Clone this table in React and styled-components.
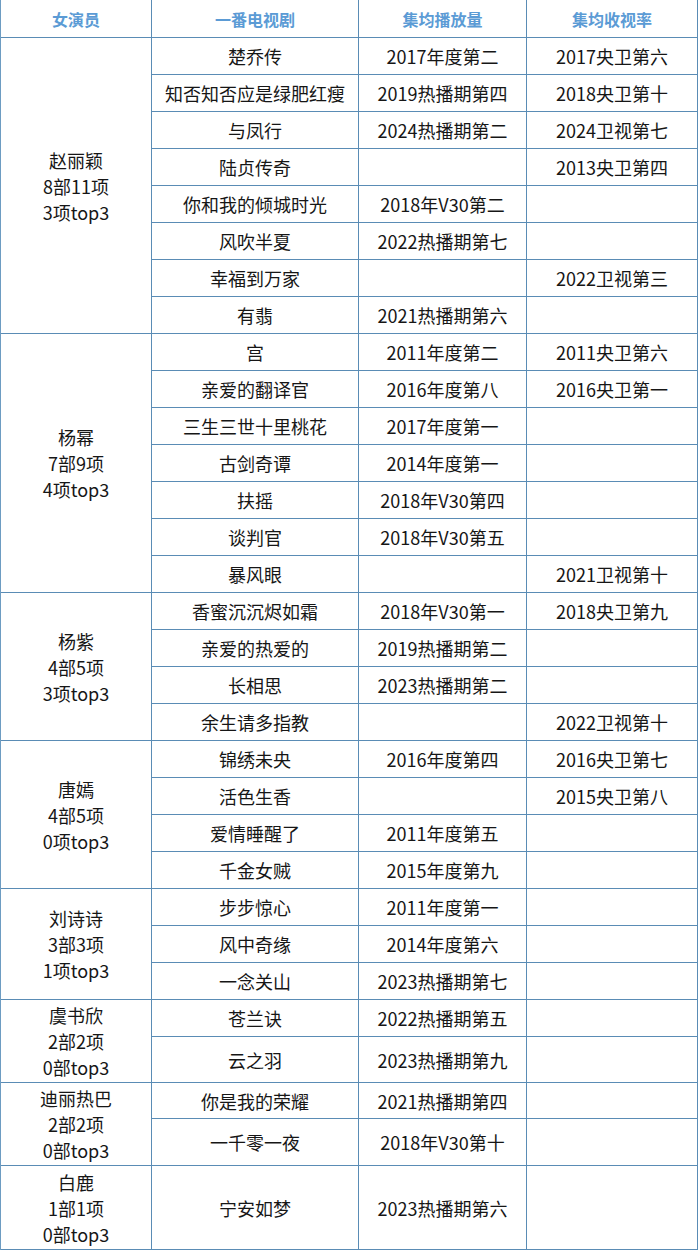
import React from "react";
import styled, { createGlobalStyle } from "styled-components";

const Global = createGlobalStyle`
  html, body { margin: 0; padding: 0; background: #ffffff; }
  body { font-family: "Noto Sans CJK SC", "Noto Sans", sans-serif; }
`;

const groups = [
  {
    name: "赵丽颖\n8部11项\n3项top3",
    rows: [
      ["楚乔传", "2017年度第二", "2017央卫第六"],
      ["知否知否应是绿肥红瘦", "2019热播期第四", "2018央卫第十"],
      ["与凤行", "2024热播期第二", "2024卫视第七"],
      ["陆贞传奇", "", "2013央卫第四"],
      ["你和我的倾城时光", "2018年V30第二", ""],
      ["风吹半夏", "2022热播期第七", ""],
      ["幸福到万家", "", "2022卫视第三"],
      ["有翡", "2021热播期第六", ""],
    ],
  },
  {
    name: "杨幂\n7部9项\n4项top3",
    rows: [
      ["宫", "2011年度第二", "2011央卫第六"],
      ["亲爱的翻译官", "2016年度第八", "2016央卫第一"],
      ["三生三世十里桃花", "2017年度第一", ""],
      ["古剑奇谭", "2014年度第一", ""],
      ["扶摇", "2018年V30第四", ""],
      ["谈判官", "2018年V30第五", ""],
      ["暴风眼", "", "2021卫视第十"],
    ],
  },
  {
    name: "杨紫\n4部5项\n3项top3",
    rows: [
      ["香蜜沉沉烬如霜", "2018年V30第一", "2018央卫第九"],
      ["亲爱的热爱的", "2019热播期第二", ""],
      ["长相思", "2023热播期第二", ""],
      ["余生请多指教", "", "2022卫视第十"],
    ],
  },
  {
    name: "唐嫣\n4部5项\n0项top3",
    rows: [
      ["锦绣未央", "2016年度第四", "2016央卫第七"],
      ["活色生香", "", "2015央卫第八"],
      ["爱情睡醒了", "2011年度第五", ""],
      ["千金女贼", "2015年度第九", ""],
    ],
  },
  {
    name: "刘诗诗\n3部3项\n1项top3",
    rows: [
      ["步步惊心", "2011年度第一", ""],
      ["风中奇缘", "2014年度第六", ""],
      ["一念关山", "2023热播期第七", ""],
    ],
  },
  {
    name: "虞书欣\n2部2项\n0部top3",
    heights: [37, 46],
    rows: [
      ["苍兰诀", "2022热播期第五", ""],
      ["云之羽", "2023热播期第九", ""],
    ],
  },
  {
    name: "迪丽热巴\n2部2项\n0部top3",
    heights: [36, 47],
    rows: [
      ["你是我的荣耀", "2021热播期第四", ""],
      ["一千零一夜", "2018年V30第十", ""],
    ],
  },
  {
    name: "白鹿\n1部1项\n0部top3",
    heights: [84],
    rows: [["宁安如梦", "2023热播期第六", ""]],
  },
];

const headers = ["女演员", "一番电视剧", "集均播放量", "集均收视率"];

const Table = styled.div`
  display: grid;
  grid-template-columns: 151px 207px 168px 171px;
  grid-template-rows: ${(p) => p.$rows};
  width: 698px;
  border-left: 1px solid #6d9cc2;
  box-sizing: border-box;
`;

const Cell = styled.div`
  box-sizing: border-box;
  border-right: 1px solid #5a8cb5;
  border-bottom: 1px solid #5a8cb5;
  display: flex;
  align-items: center;
  justify-content: center;
  text-align: center;
  white-space: nowrap;
  font-size: 18px;
  color: #161616;
  line-height: 1;
`;

const HeadCell = styled(Cell)`
  font-size: 16px;
  font-weight: 700;
  color: #5b9bd5;
`;

const ActorCell = styled(Cell)`
  grid-row: span ${(p) => p.$span};
  white-space: pre-line;
  line-height: 26px;
`;

export default function App() {
  const heights = [38];
  groups.forEach((g) => {
    g.rows.forEach((_, i) => heights.push(g.heights ? g.heights[i] : 37));
  });
  const rowsTemplate = heights.map((h) => `${h}px`).join(" ");

  return (
    <>
      <Global />
      <Table $rows={rowsTemplate}>
        {headers.map((h) => (
          <HeadCell key={h}>{h}</HeadCell>
        ))}
        {groups.map((g) => (
          <React.Fragment key={g.name}>
            <ActorCell $span={g.rows.length}>{g.name}</ActorCell>
            {g.rows.map((r, i) =>
              r.map((c, j) => <Cell key={`${i}-${j}`}>{c}</Cell>)
            )}
          </React.Fragment>
        ))}
      </Table>
    </>
  );
}
